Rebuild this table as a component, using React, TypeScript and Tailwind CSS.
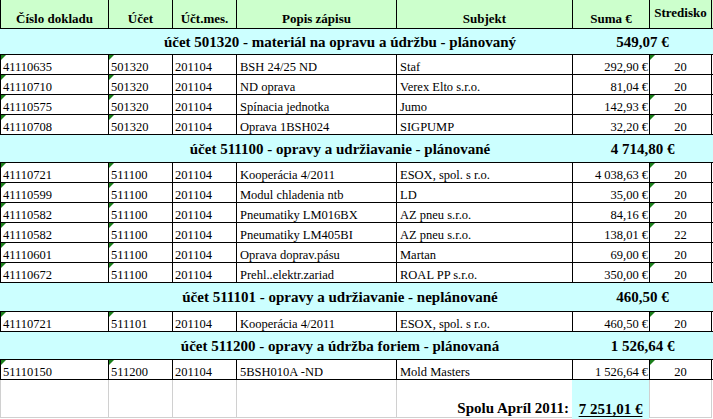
import clsx from 'clsx';

type Row = {
  doc: string;
  ucet: string;
  mes: string;
  popis: string;
  subjekt: string;
  suma: string;
  str: string;
  flag: boolean;
};

type Section = { title: string; total: string; h: string; rows: Row[] };

const GRID = 'grid grid-cols-[108px_64px_64px_160px_176px_77px_63px]';

const sections: Section[] = [
  {
    title: 'účet 501320 - materiál na opravu a údržbu - plánovaný',
    total: '549,07 €',
    h: 'h-[26px]',
    rows: [
      { doc: '41110635', ucet: '501320', mes: '201104', popis: 'BSH 24/25 ND', subjekt: 'Staf', suma: '292,90 €', str: '20', flag: true },
      { doc: '41110710', ucet: '501320', mes: '201104', popis: 'ND oprava', subjekt: 'Verex Elto s.r.o.', suma: '81,04 €', str: '20', flag: false },
      { doc: '41110575', ucet: '501320', mes: '201104', popis: 'Spínacia jednotka', subjekt: 'Jumo', suma: '142,93 €', str: '20', flag: true },
      { doc: '41110708', ucet: '501320', mes: '201104', popis: 'Oprava 1BSH024', subjekt: 'SIGPUMP', suma: '32,20 €', str: '20', flag: true },
    ],
  },
  {
    title: 'účet 511100 - opravy a udržiavanie - plánované',
    total: '4 714,80 €',
    h: 'h-[28px]',
    rows: [
      { doc: '41110721', ucet: '511100', mes: '201104', popis: 'Kooperácia 4/2011', subjekt: 'ESOX, spol. s r.o.', suma: '4 038,63 €', str: '20', flag: true },
      { doc: '41110599', ucet: '511100', mes: '201104', popis: 'Modul chladenia ntb', subjekt: 'LD', suma: '35,00 €', str: '20', flag: true },
      { doc: '41110582', ucet: '511100', mes: '201104', popis: 'Pneumatiky LM016BX', subjekt: 'AZ pneu s.r.o.', suma: '84,16 €', str: '20', flag: true },
      { doc: '41110582', ucet: '511100', mes: '201104', popis: 'Pneumatiky LM405BI', subjekt: 'AZ pneu s.r.o.', suma: '138,01 €', str: '22', flag: true },
      { doc: '41110601', ucet: '511100', mes: '201104', popis: 'Oprava doprav.pásu', subjekt: 'Martan', suma: '69,00 €', str: '20', flag: false },
      { doc: '41110672', ucet: '511100', mes: '201104', popis: 'Prehl..elektr.zariad', subjekt: 'ROAL PP s.r.o.', suma: '350,00 €', str: '20', flag: true },
    ],
  },
  {
    title: 'účet 511101 - opravy a udržiavanie - neplánované',
    total: '460,50 €',
    h: 'h-[29px]',
    rows: [
      { doc: '41110721', ucet: '511101', mes: '201104', popis: 'Kooperácia 4/2011', subjekt: 'ESOX, spol. s r.o.', suma: '460,50 €', str: '20', flag: true },
    ],
  },
  {
    title: 'účet 511200 - opravy a údržba foriem - plánovaná',
    total: '1 526,64 €',
    h: 'h-[28px]',
    rows: [
      { doc: '51110150', ucet: '511200', mes: '201104', popis: '5BSH010A -ND', subjekt: 'Mold Masters', suma: '1 526,64 €', str: '20', flag: true },
    ],
  },
];

// Excel "number stored as text" marker
function Flag() {
  return (
    <span className="absolute left-0 top-0 h-0 w-0 border-t-[5px] border-r-[5px] border-t-[#1a7f1a] border-r-transparent" />
  );
}

function Cell({ children, className, flag }: { children?: React.ReactNode; className?: string; flag?: boolean }) {
  return (
    <div className={clsx('relative flex items-end overflow-hidden whitespace-nowrap border-l border-black leading-[13px]', className)}>
      {flag && <Flag />}
      {children}
    </div>
  );
}

function HeadCell({ children, className }: { children: React.ReactNode; className?: string }) {
  return (
    <div className={clsx('flex justify-center whitespace-nowrap border-l border-black leading-[15px]', className ?? 'items-end pb-[2px]')}>
      {children}
    </div>
  );
}

export default function App() {
  return (
    <div className="h-[419px] w-[713px] overflow-hidden bg-white font-[family-name:Liberation_Serif,Times_New_Roman,serif] text-black">
      <div className={clsx(GRID, 'h-[28px] bg-[#ccffcc] text-[13px] font-bold')}>
        <HeadCell>Číslo dokladu</HeadCell>
        <HeadCell>Účet</HeadCell>
        <HeadCell>Účt.mes.</HeadCell>
        <HeadCell>Popis zápisu</HeadCell>
        <HeadCell>Subjekt</HeadCell>
        <HeadCell>Suma €</HeadCell>
        <HeadCell className="items-start border-r pt-[5px]">Stredisko</HeadCell>
      </div>

      {sections.map((s) => (
        <div key={s.title}>
          <div className={clsx('grid grid-cols-[108px_464px_141px] border-t border-black bg-[#ccffff] text-[15px] font-bold leading-[18px]', s.h)}>
            <div />
            <div className="flex items-center justify-center whitespace-nowrap">{s.title}</div>
            <div className="flex items-center justify-center whitespace-nowrap">{s.total}</div>
          </div>
          {s.rows.map((r, i) => (
            <div key={i} className={clsx(GRID, 'h-[20px] border-t border-black text-[12.5px]')}>
              <Cell flag className="pl-[2px]">{r.doc}</Cell>
              <Cell flag className="pl-[2px]">{r.ucet}</Cell>
              <Cell className="pl-[2px]">{r.mes}</Cell>
              <Cell className="pl-[3px]">{r.popis}</Cell>
              <Cell className="pl-[3px]">{r.subjekt}</Cell>
              <Cell className="justify-end pr-[1px]">{r.suma}</Cell>
              <Cell flag={r.flag} className="justify-center border-r">{r.str}</Cell>
            </div>
          ))}
        </div>
      ))}

      <div className={clsx(GRID, 'h-[40px] border-t border-black text-[15px] font-bold leading-[17px]')}>
        <div className="mb-px border-b border-l border-[#d0d0d0]" />
        <div className="mb-px border-b border-l border-[#d0d0d0]" />
        <div className="mb-px border-b border-l border-[#d0d0d0]" />
        <div className="mb-px border-b border-l border-[#d0d0d0]" />
        <div className="mb-px flex items-end justify-end whitespace-nowrap border-b border-l border-[#d0d0d0] pr-[3px]">
          Spolu Apríl 2011:
        </div>
        <div className="flex items-end justify-center whitespace-nowrap bg-[#ccffff] pb-px">
          <span className="underline decoration-1 underline-offset-2">7 251,01 €</span>
        </div>
        <div className="mb-px border-b border-l border-r border-[#d0d0d0]" />
      </div>
    </div>
  );
}
